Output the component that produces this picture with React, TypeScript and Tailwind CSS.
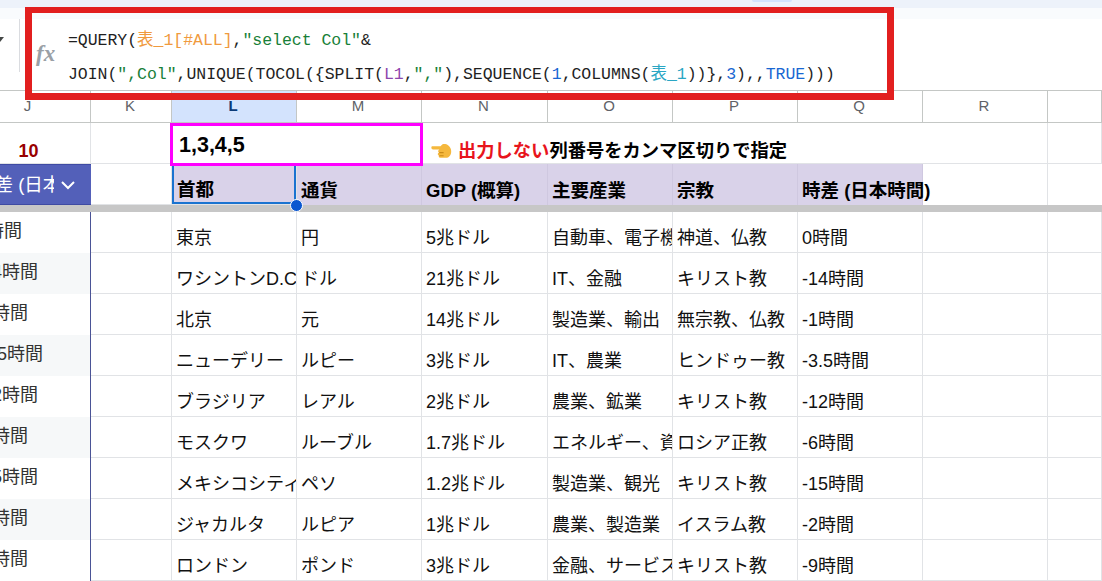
const widths = "grid-cols-[91px_81px_125px_125px_126px_125px_125px_125px_125px_54px]";

const rows = [
  ["東京", "円", "5兆ドル", "自動車、電子機器", "神道、仏教", "0時間"],
  ["ワシントンD.C.", "ドル", "21兆ドル", "IT、金融", "キリスト教", "-14時間"],
  ["北京", "元", "14兆ドル", "製造業、輸出", "無宗教、仏教", "-1時間"],
  ["ニューデリー", "ルピー", "3兆ドル", "IT、農業", "ヒンドゥー教", "-3.5時間"],
  ["ブラジリア", "レアル", "2兆ドル", "農業、鉱業", "キリスト教", "-12時間"],
  ["モスクワ", "ルーブル", "1.7兆ドル", "エネルギー、資源", "ロシア正教", "-6時間"],
  ["メキシコシティ", "ペソ", "1.2兆ドル", "製造業、観光", "キリスト教", "-15時間"],
  ["ジャカルタ", "ルピア", "1兆ドル", "農業、製造業", "イスラム教", "-2時間"],
  ["ロンドン", "ポンド", "3兆ドル", "金融、サービス", "キリスト教", "-9時間"],
];

const columns = ["J", "K", "L", "M", "N", "O", "P", "Q", "R", ""];
const headers = ["首都", "通貨", "GDP (概算)", "主要産業", "宗教", "時差 (日本時間)"];

function Cell({ children, className = "" }: { children?: React.ReactNode; className?: string }) {
  return (
    <div className={`overflow-hidden whitespace-nowrap border-r border-b border-[#e1e3e6] pl-[4px] ${className}`}>
      {children}
    </div>
  );
}

function FormulaBar() {
  return (
    <div className="relative h-[91px] border-b border-[#c4c7c5] bg-white">
      <div className="relative h-2 bg-[#edf2fa]">
        <div className="absolute left-[752px] top-0 h-[2px] w-[40px] rounded-b bg-[#d3e3fd]" />
      </div>
      <div className="h-[11px] bg-[#f9fbfd]" />
      <div className="flex h-[71px] items-start">
        <div className="flex h-[53px] w-5 items-start border-r border-[#dadce0] pt-[18px] text-[#444746]">
          <svg width="8" height="6" viewBox="0 0 8 6" className="-ml-1">
            <path d="M0 0h8L4 5z" fill="currentColor" />
          </svg>
        </div>
        <span className="ml-[16px] mt-[20px] w-[32px] font-['Liberation_Serif',serif] text-[23px] font-bold italic leading-[30px] text-[#9aa0a6]">fx</span>
        <div className="mt-[5px] font-['Liberation_Mono','Noto_Sans_CJK_JP',monospace] text-[16.5px] leading-[34px] tracking-[-0.03px] text-[#1f1f1f]">
          <div>
            =QUERY(<span className="text-[#f09a3e]">表_1[#ALL]</span>,<span className="text-[#188038]">"select Col"</span>&amp;
          </div>
          <div>
            JOIN(<span className="text-[#188038]">",Col"</span>,UNIQUE(TOCOL({"{"}SPLIT(<span className="text-[#8e44ad]">L1</span>,<span className="text-[#188038]">","</span>),SEQUENCE(<span className="text-[#1967d2]">1</span>,COLUMNS(<span className="text-[#2aa6c4]">表_1</span>)){"}"},<span className="text-[#1967d2]">3</span>),,<span className="text-[#1967d2]">TRUE</span>)))
          </div>
        </div>
      </div>
      {/* red annotation frame */}
      <div className="absolute left-[25px] top-[7px] z-20 h-[93px] w-[869px] border-x-[7px] border-t-[6px] border-b-[7px] border-[#e21f1f]" />
    </div>
  );
}

export default function App() {
  return (
    <div className="relative h-[581px] w-[1102px] overflow-hidden bg-white font-['Liberation_Sans','Noto_Sans_CJK_JP',sans-serif] text-[18px] text-black">
      <FormulaBar />

      <div className={`grid h-[32px] ${widths}`}>
        {columns.map((c) => (
          <div
            key={c || "end"}
            className={`flex items-center justify-center border-r border-b border-[#c4c7c5] text-[15px] ${
              c === "L" ? "bg-[#d3e3fd] font-bold text-[#0b3a77]" : "text-[#5f6368]"
            } ${c === "J" ? "pr-[35px]" : "pr-[2px]"}`}
          >
            {c}
          </div>
        ))}
      </div>

      <div className={`grid h-[41px] ${widths}`}>
        <Cell className="flex items-end justify-center pb-[1px] pl-0 pr-[37px] leading-[22px] font-bold text-[#980000]">10</Cell>
        <Cell />
        <div className="relative z-10 col-span-2 flex items-center pt-[3px] pl-[7px] text-[21.5px] font-bold">
          1,3,4,5
          <div className="absolute -bottom-[2px] -left-[2px] -right-[1px] top-0 border-[3px] border-[#ff00ff]" />
        </div>
        <div className="col-span-4 flex items-end gap-[6px] border-b border-[#e1e3e6] pl-[9px] font-bold">
          <svg width="21" height="19" viewBox="0 0 20 18" className="mb-[3px]">
            <path d="M1 5h8l2-2c3-1 7 1 8 5s-1 8-5 8H9c-2 0-2-2-1-2-2 0-2-3 0-3-1 0-2-2 0-3H2C0 8 0 5 1 5z" fill="#f5b83d" />
            <path d="M8 14h4M8 11h4" stroke="#c98a1a" strokeWidth="1" />
          </svg>
          <span className="text-[18.3px] leading-[24px]">
            <span className="text-[#e8141c]">出力しない</span>列番号をカンマ区切りで指定
          </span>
        </div>
        <Cell />
        <Cell />
      </div>

      <div className={`grid h-[41px] ${widths}`}>
        <div className="flex items-center justify-between overflow-hidden whitespace-nowrap border-y border-l-0 border-[#3f4ba3] bg-[#5360b9] pl-0 pr-[15px] text-[18.5px] text-white">
          <span className="w-[54px] overflow-hidden">
            <span className="-ml-[24px] block">{headers[5]}</span>
          </span>
          <svg width="16" height="16" viewBox="0 0 16 16" fill="none" stroke="currentColor" strokeWidth="2">
            <path d="M2 5l6 6 6-6" />
          </svg>
        </div>
        <Cell />
        <div className="relative flex items-end border-r border-b border-[#e1e3e6] bg-[#d9d2e9] pl-[5px] text-[18.5px] font-bold">
          首都
          <div className="absolute inset-0 border-2 border-[#1a73d0]" />
        </div>
        {headers.slice(1).map((h) => (
          <div key={h} className="flex items-end whitespace-nowrap border-r border-[#cfc8e0] bg-[#d9d2e9] pl-[4px] text-[18.5px] font-bold">
            {h}
          </div>
        ))}
        <div className="border-r border-[#e1e3e6]" />
        <div />
      </div>

      {/* frozen rows divider */}
      <div className="relative h-[7px] bg-[#c7c7c7]">
        <div className="absolute left-[290px] top-[-6px] size-[13px] rounded-full border border-white bg-[#0b57d0]" />
      </div>

      {rows.map((row, i) => (
        <div key={row[0]} className={`grid h-[41px] leading-[26px] ${widths}`}>
          <div className={`overflow-hidden whitespace-nowrap border-r border-[#4a5396] pt-[6px] ${i % 2 === 1 ? "bg-[#f6f8f9]" : "bg-white"}`}>
            <div className="-ml-[24px] text-[#333]">{row[5]}</div>
          </div>
          <Cell />
          {row.map((text, j) => (
            <Cell key={j} className="pt-[13px] text-[#111]">{text}</Cell>
          ))}
          <Cell />
          <Cell />
        </div>
      ))}
    </div>
  );
}
